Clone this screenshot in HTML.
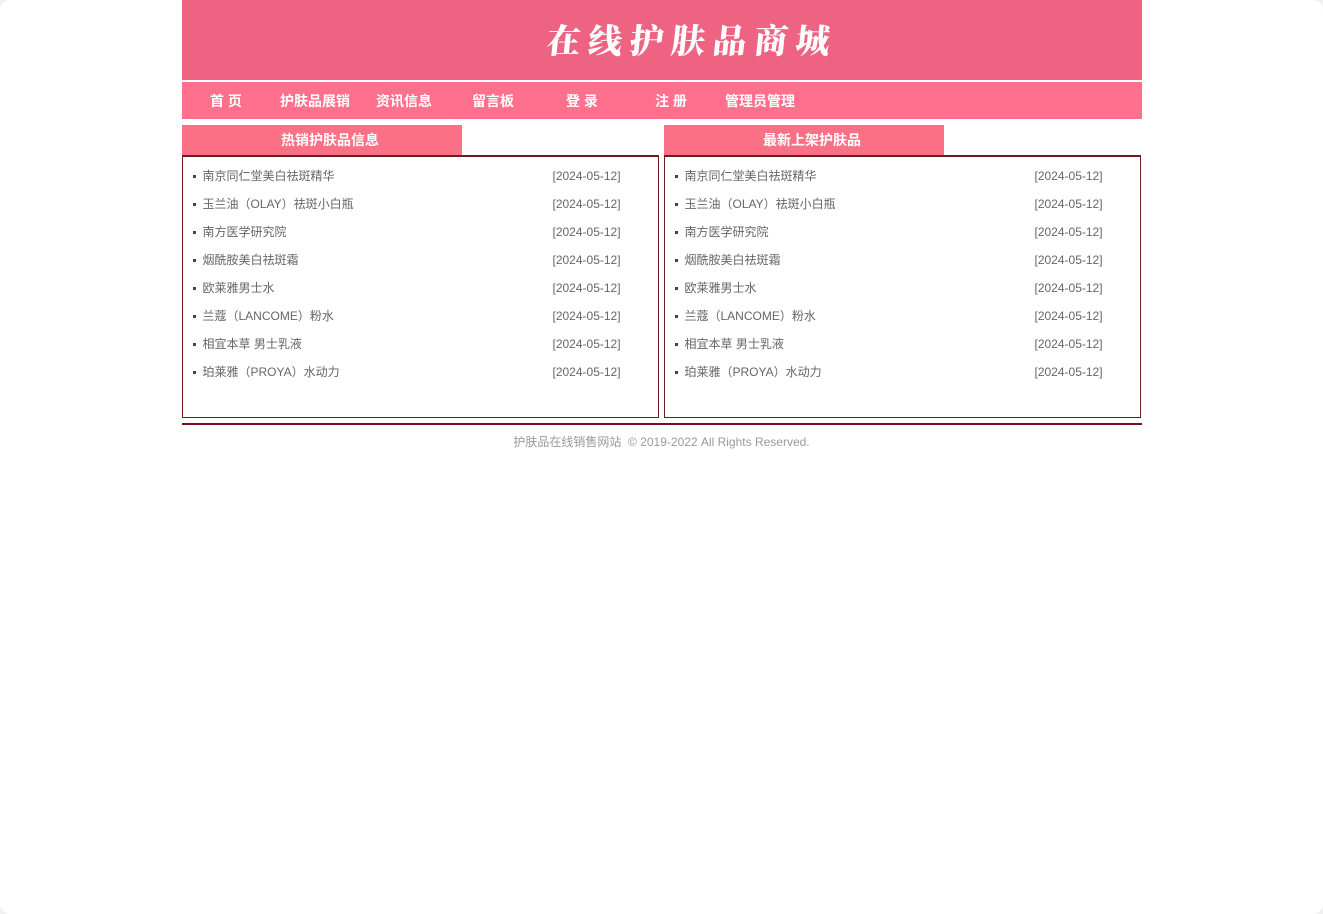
<!DOCTYPE html>
<html lang="zh">
<head>
<meta charset="utf-8">
<title>在线护肤品商城</title>
<style>
html,body{margin:0;padding:0;width:1323px;height:914px;overflow:hidden;background:#f0f0f0;}
body{font-family:"Liberation Sans","WenQuanYi Zen Hei","Noto Sans CJK SC",sans-serif;font-size:12px;color:#666;}
#page{position:absolute;left:0;top:0;width:1323px;height:914px;background:#fff;border-radius:10px;overflow:hidden;}
.abs{position:absolute;}
#hd{left:182px;top:0;width:960px;height:80px;background:#ef6382;}
#title{left:547px;top:14px;width:300px;height:50px;line-height:50px;font-family:"Noto Serif CJK SC",serif;font-weight:900;font-size:34px;letter-spacing:7.5px;color:#fff;white-space:nowrap;transform:skewX(-6deg);}
#nav{left:182px;top:82px;width:960px;height:37px;background:#ff708c;}
.n{position:absolute;top:92px;height:18px;line-height:18px;font-size:14px;font-weight:700;color:#fff;white-space:pre;}
.sec{position:absolute;top:125px;width:280px;height:30px;line-height:30px;text-align:center;font-size:14px;font-weight:700;color:#fff;box-sizing:border-box;padding-left:16px;
background-color:#ff7389;background-image:radial-gradient(circle at 1px 1px,#f26a80 0,#f26a80 .7px,transparent 1px),radial-gradient(circle at 3px 3px,#f26a80 0,#f26a80 .7px,transparent 1px);background-size:4px 4px;}
.box{position:absolute;top:155px;width:475px;height:260px;border:1px solid #701c1f;border-top:2px solid #701c1f;}
.r{position:absolute;left:0;width:475px;height:28px;line-height:28px;white-space:pre;}
.r i{position:absolute;left:10px;top:13px;width:3px;height:3px;background:#444;}
.r b{position:absolute;left:19.5px;top:0;font-weight:400;}
.r u{position:absolute;left:369.5px;top:0;text-decoration:none;}
#line{left:182px;top:423px;width:960px;height:2px;background:#7a1016;}
#ft{left:181.5px;top:433px;width:960px;height:18px;line-height:18px;text-align:center;color:#999;white-space:pre;}
</style>
</head>
<body>
<div id="page">
<div id="hd" class="abs"></div>
<div id="title" class="abs">在线护肤品商城</div>
<div id="nav" class="abs"></div>
<div class="n" style="left:210px">首 页</div>
<div class="n" style="left:280px">护肤品展销</div>
<div class="n" style="left:376px">资讯信息</div>
<div class="n" style="left:472px">留言板</div>
<div class="n" style="left:566px">登 录</div>
<div class="n" style="left:655px">注 册</div>
<div class="n" style="left:725px">管理员管理</div>

<div class="sec" style="left:182px">热销护肤品信息</div>
<div class="sec" style="left:664px">最新上架护肤品</div>

<div class="box" style="left:182px">
<div class="r" style="top:5px"><i></i><b>南京同仁堂美白祛斑精华</b><u>[2024-05-12]</u></div>
<div class="r" style="top:33px"><i></i><b>玉兰油（OLAY）祛斑小白瓶</b><u>[2024-05-12]</u></div>
<div class="r" style="top:61px"><i></i><b>南方医学研究院</b><u>[2024-05-12]</u></div>
<div class="r" style="top:89px"><i></i><b>烟酰胺美白祛斑霜</b><u>[2024-05-12]</u></div>
<div class="r" style="top:117px"><i></i><b>欧莱雅男士水</b><u>[2024-05-12]</u></div>
<div class="r" style="top:145px"><i></i><b>兰蔻（LANCOME）粉水</b><u>[2024-05-12]</u></div>
<div class="r" style="top:173px"><i></i><b>相宜本草 男士乳液</b><u>[2024-05-12]</u></div>
<div class="r" style="top:201px"><i></i><b>珀莱雅（PROYA）水动力</b><u>[2024-05-12]</u></div>
</div>

<div class="box" style="left:664px">
<div class="r" style="top:5px"><i></i><b>南京同仁堂美白祛斑精华</b><u>[2024-05-12]</u></div>
<div class="r" style="top:33px"><i></i><b>玉兰油（OLAY）祛斑小白瓶</b><u>[2024-05-12]</u></div>
<div class="r" style="top:61px"><i></i><b>南方医学研究院</b><u>[2024-05-12]</u></div>
<div class="r" style="top:89px"><i></i><b>烟酰胺美白祛斑霜</b><u>[2024-05-12]</u></div>
<div class="r" style="top:117px"><i></i><b>欧莱雅男士水</b><u>[2024-05-12]</u></div>
<div class="r" style="top:145px"><i></i><b>兰蔻（LANCOME）粉水</b><u>[2024-05-12]</u></div>
<div class="r" style="top:173px"><i></i><b>相宜本草 男士乳液</b><u>[2024-05-12]</u></div>
<div class="r" style="top:201px"><i></i><b>珀莱雅（PROYA）水动力</b><u>[2024-05-12]</u></div>
</div>

<div id="line" class="abs"></div>
<div id="ft" class="abs">护肤品在线销售网站  © 2019-2022 All Rights Reserved.</div>
</div>
</body>
</html>
